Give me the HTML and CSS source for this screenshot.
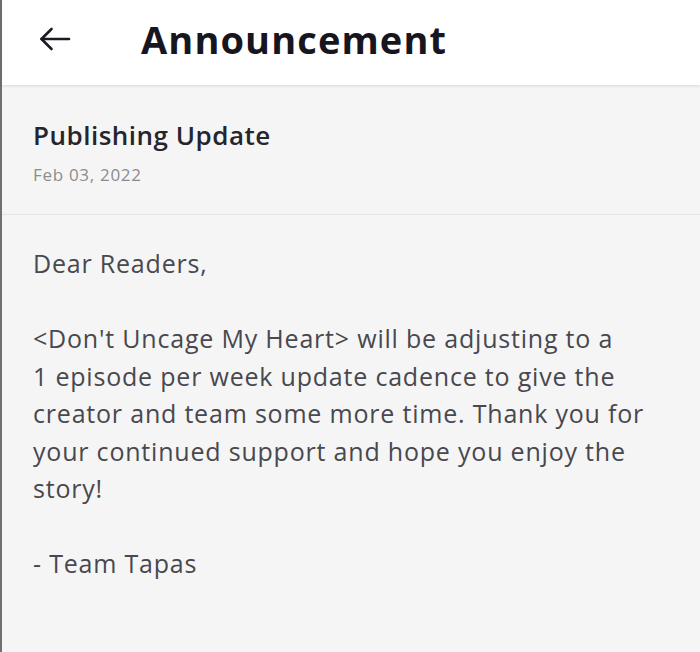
FILE: index.html
```html
<!DOCTYPE html>
<html lang="en">
<head>
  <meta charset="UTF-8" />
  <title>Announcement</title>
  <link rel="stylesheet" href="styles.css">
</head>
<body>
  <div class="screen">
    <header class="top-bar">
      <button class="back-btn" aria-label="Back">
        <svg width="32" height="24" viewBox="0 0 32 24" fill="none" stroke="#1c1b24" stroke-width="2.6" stroke-linecap="round" stroke-linejoin="round">
          <path d="M30 12H2.5" />
          <path d="M12.5 2L2.5 12L12.5 22" />
        </svg>
      </button>
      <h1 class="page-title">Announcement</h1>
    </header>

    <section class="notice-head">
      <h2 class="notice-title">Publishing Update</h2>
      <p class="notice-date">Feb 03, 2022</p>
    </section>

    <article class="notice-body">
      <p>Dear Readers,</p>
      <p>&lt;Don't Uncage My Heart&gt; will be adjusting to a<br>1 episode per week update cadence to give the<br>creator and team some more time. Thank you for<br>your continued support and hope you enjoy the<br>story!</p>
      <p>- Team Tapas</p>
    </article>
  </div>
</body>
</html>
```

FILE: styles.css
```css
* {
  box-sizing: border-box;
}

html,
body {
  height: 100%;
}

body {
  margin: 0;
  font-family: 'Open Sans', 'Noto Sans', sans-serif;
  background: #f5f5f5;
  color: #3a3a40;
}

.screen {
  min-height: 100%;
  border-left: 2px solid #707070;
  background: #f5f5f5;
}

.top-bar {
  height: 85px;
  background: #ffffff;
  display: flex;
  align-items: center;
  padding: 0 0 8px 37px;
  box-shadow: 0 1px 3px rgba(0, 0, 0, 0.12);
  position: relative;
}

.back-btn {
  border: none;
  background: none;
  padding: 0;
  width: 34px;
  height: 30px;
  display: flex;
  align-items: center;
  margin-right: 68px;
  cursor: pointer;
}

.page-title {
  margin: 0;
  font-size: 38px;
  font-weight: 700;
  color: #17161f;
  letter-spacing: 1.1px;
}

.notice-head {
  padding: 32px 31px 0;
  height: 130px;
  border-bottom: 1px solid #e4e4e4;
}

.notice-title {
  margin: 0;
  font-size: 26px;
  font-weight: 600;
  color: #26252c;
  letter-spacing: 0.5px;
}

.notice-date {
  margin: 10px 0 0;
  font-size: 17px;
  color: #8c8c8c;
  letter-spacing: 0.7px;
}

.notice-body {
  padding: 30px 8px 0 31px;
  font-size: 25px;
  line-height: 37.5px;
  letter-spacing: 0.8px;
  color: #48484e;
}

.notice-body p {
  margin: 0 0 37.5px;
}
```
